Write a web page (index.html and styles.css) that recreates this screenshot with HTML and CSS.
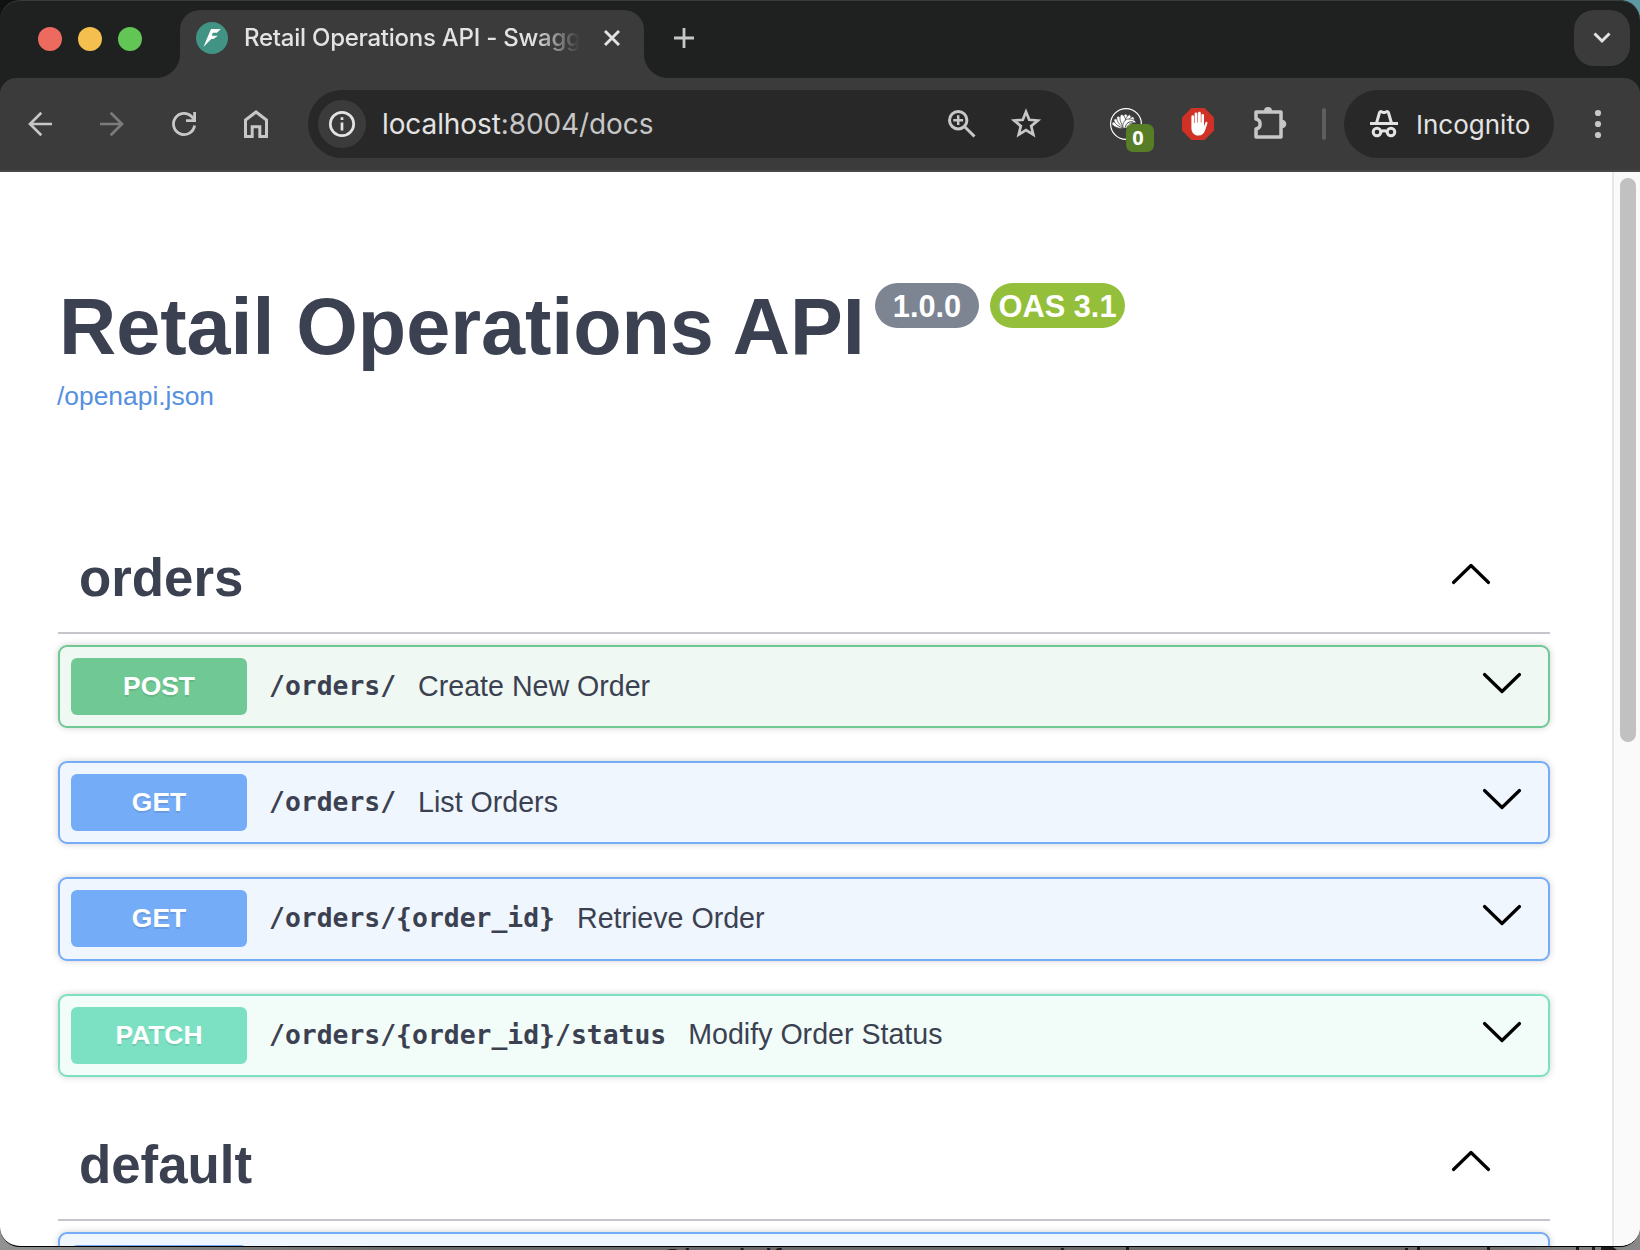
FILE: index.html
```html
<!DOCTYPE html>
<html lang="en">
<head>
<meta charset="utf-8">
<title>Retail Operations API - Swagger UI</title>
<link rel="stylesheet" href="styles.css">
</head>
<body>
<div class="window">
  <header class="tabstrip">
    <div class="lights"><i class="light red"></i><i class="light yellow"></i><i class="light green"></i></div>
    <div class="tab">
      <svg class="favicon" width="32" height="32" viewBox="0 0 32 32"><circle cx="16" cy="16" r="16" fill="#419384"/><path d="M15 7h9.800l-3.800 3.700h-4.200l-1 3.100h6l-4.300 3.300h-2.200L7.400 25z" fill="#fff"/></svg>
      <span class="tab-title">Retail Operations API - Swagger UI</span>
      <svg class="tab-close" width="16" height="16" viewBox="0 0 16 16" fill="none" stroke="#e3e3e3" stroke-width="2.9"><path d="M1 1l14 14M15 1L1 15"/></svg>
    </div>
    <svg class="new-tab" width="20" height="20" viewBox="0 0 20 20" fill="none" stroke="#c7c7c7" stroke-width="2.8"><path d="M10 0v20M0 10h20"/></svg>
    <button class="tab-search"><svg width="18" height="12" viewBox="0 0 18 12" fill="none" stroke="#e3e3e3" stroke-width="3"><path d="M1.5 1.5L9 9l7.5-7.5"/></svg></button>
  </header>

  <nav class="toolbar">
    <div class="nav-buttons">
      <svg width="32" height="32" viewBox="0 0 32 32" fill="none" stroke="#c7c7c7" stroke-width="2.7"><path d="M28 16H6M17.3 4.8L6 16l11.300 11.200"/></svg>
      <svg width="32" height="32" viewBox="0 0 32 32" fill="none" stroke="#7c7c7c" stroke-width="2.7"><path d="M4 16h22M14.700 4.800L26 16 14.700 27.200"/></svg>
      <svg width="32" height="32" viewBox="0 0 32 32" fill="none" stroke="#c7c7c7" stroke-width="2.8"><path d="M26.600 17.500A10.600 10.600 0 1 1 23.800 8.700L26.200 11.600"/><path d="M26.600 4v8.600H18"/></svg>
      <svg width="32" height="32" viewBox="0 0 32 32" fill="none" stroke="#c7c7c7" stroke-width="3"><path d="M5.500 28.500V12L16 4l10.500 8v16.500h-6.700V18.700h-7.600v9.800z"/></svg>
    </div>
    <div class="omnibox">
      <span class="site-info"><svg width="28" height="28" viewBox="0 0 28 28" fill="none" stroke="#e3e3e3" stroke-width="2.7"><circle cx="14" cy="14" r="11.700"/><path d="M14 12.500v8M14 7.300v2.800"/></svg></span>
      <span class="url">localhost<span class="url-rest">:8004/docs</span></span>
      <svg class="zoom-icon" width="28" height="28" viewBox="0 0 28 28" fill="none" stroke="#c7c7c7" stroke-width="3"><circle cx="10.200" cy="10.200" r="8.700"/><path d="M16.700 16.700L26.500 26.500"/><path d="M10.200 5.300v9.800M5.300 10.200h9.800" stroke-width="2.500"/></svg>
      <svg width="32" height="32" viewBox="0 0 32 32" fill="none" stroke="#c7c7c7" stroke-width="2.700"><path d="M16 3.800l3.200 8 8.600.7-6.600 5.600 2.100 8.500L16 22l-7.300 4.600 2.100-8.500-6.600-5.600 8.600-.7z"/></svg>
    </div>
    <div class="extensions">
      <div class="ext">
        <svg width="32" height="32" viewBox="0 0 32 32"><circle cx="16" cy="16" r="15.400" fill="none" stroke="#fff" stroke-width="1.200"/><g fill="#fff" stroke="#3b3b3b" stroke-width=".7"><path id="leaf" d="M15 20C11.500 15 12.500 7 15.500 6c3.500 1 4 8-.5 14z"/><use href="#leaf" transform="rotate(-72 15 20)"/><use href="#leaf" transform="rotate(-54 15 20)"/><use href="#leaf" transform="rotate(-36 15 20)"/><use href="#leaf" transform="rotate(-18 15 20)"/><use href="#leaf" transform="rotate(18 15 20)"/><use href="#leaf" transform="rotate(36 15 20)"/><path d="M13 20c-1-5 2-9 6-9s7 2 7 4c-5-1-8 1-9 5z"/></g><path d="M15.500 19c.5-4 4-6 7.500-5" stroke="#3b3b3b" fill="none"/></svg>
        <span class="badge">0</span>
      </div>
      <svg width="32" height="32" viewBox="0 0 32 32"><path d="M9.400 0h13.200L32 9.400v13.200L22.600 32H9.400L0 22.600V9.400z" fill="#d03126"/><path d="M9.400 17V8.500a1.300 1.300 0 0 1 2.600 0V15h.6V6a1.400 1.400 0 0 1 2.800 0v8.500h.6V5.200a1.400 1.400 0 0 1 2.800 0v9.300h.6V7.300a1.300 1.300 0 0 1 2.600 0V18.500l1.200-3.600c.6-1.700 2.600-1.500 2.200.5L23.200 22c-1 3.400-3.200 5.600-6.700 5.600-4.600 0-7.100-3.400-7.100-7.600z" fill="#fff"/></svg>
      <svg class="puzzle" width="34" height="34" viewBox="0 0 34 34"><path d="M2 6h25v25H2v-8a5.100 5.100 0 0 0 0-10z" fill="none" stroke="#c7c7c7" stroke-width="3.500" stroke-linejoin="round"/><path d="M10 5a4 4 0 0 1 8 0zM28 13.700a4.300 4.300 0 0 1 0 8.600z" fill="#c7c7c7"/></svg>
    </div>
    <i class="divider"></i>
    <div class="incognito">
      <svg width="28" height="28" viewBox="0 0 28 28" fill="none" stroke="#e3e3e3" stroke-width="3"><path d="M0 13.500h28M6.700 12.500L9.500 2.700c.3-1 1-1.300 1.800-1l1.500.6c.8.300 1.600.3 2.400 0l1.500-.6c.8-.3 1.500 0 1.800 1L21.300 12.500"/><circle cx="7" cy="22" r="3.800"/><circle cx="21" cy="22" r="3.800"/><path d="M11 21.600c2-1 4-1 6 0"/></svg>
      <span>Incognito</span>
    </div>
    <svg class="menu-dots" width="8" height="32" viewBox="0 0 8 32" fill="#c7c7c7"><circle cx="4" cy="5" r="3.100"/><circle cx="4" cy="16" r="3.100"/><circle cx="4" cy="27" r="3.100"/></svg>
  </nav>

  <div class="viewport">
    <main class="page">
      <div class="title-row">
        <h1>Retail Operations API</h1>
        <span class="pill version">1.0.0</span>
        <span class="pill oas">OAS 3.1</span>
      </div>
      <a class="spec-link">/openapi.json</a>

      <section class="tag-section first">
        <h2 class="tag">orders<svg class="chev" width="40" height="24" viewBox="0 0 40 24"><path d="M2.500 20.500L20 3.500l17.500 17"/></svg></h2>
        <div class="ops">
          <div class="op post"><span class="method">POST</span><span class="path">/orders/</span><span class="desc">Create New Order</span><svg class="chev" width="40" height="24" viewBox="0 0 40 24"><path d="M2.500 3.500L20 20.500l17.500-17"/></svg></div>
          <div class="op get"><span class="method">GET</span><span class="path">/orders/</span><span class="desc">List Orders</span><svg class="chev" width="40" height="24" viewBox="0 0 40 24"><path d="M2.500 3.500L20 20.500l17.500-17"/></svg></div>
          <div class="op get"><span class="method">GET</span><span class="path">/orders/{order_id}</span><span class="desc">Retrieve Order</span><svg class="chev" width="40" height="24" viewBox="0 0 40 24"><path d="M2.500 3.500L20 20.500l17.500-17"/></svg></div>
          <div class="op patch"><span class="method">PATCH</span><span class="path">/orders/{order_id}/status</span><span class="desc">Modify Order Status</span><svg class="chev" width="40" height="24" viewBox="0 0 40 24"><path d="M2.500 3.500L20 20.500l17.500-17"/></svg></div>
        </div>
      </section>

      <section class="tag-section">
        <h2 class="tag">default<svg class="chev" width="40" height="24" viewBox="0 0 40 24"><path d="M2.500 20.500L20 3.500l17.500 17"/></svg></h2>
        <div class="ops"><div class="op get"><span class="method"></span></div></div>
      </section>
    </main>
    <div class="scrollbar"><div class="thumb"></div></div>
  </div>
</div>
<div class="behind"><span>Check if</span><span class="behind-word">th</span><svg width="520" height="3" viewBox="0 0 520 3" fill="#1c1a1a"><path d="M25 0h3v3h-3zM304 1h3v2h-3zM316 0h3v3h-3zM386 0h3v3h-3zM475 0h3v3h-3zM491 0h3v3h-3zM500 0h12l4 3h-16z"/></svg></div>
</body>
</html>
```
FILE: styles.css
```css
* { box-sizing: border-box; }

body {
  margin: 0;
  width: 1640px;
  height: 1250px;
  overflow: hidden;
  background: linear-gradient(90deg, #101211 0 50%, #5d9aa6 50%) top / 100% 60px no-repeat, linear-gradient(90deg, #929292, #6b6a6a 25%, #6d6b6b 90%, #8a8888);
  font-family: "Liberation Sans", Arial, sans-serif;
  color: #3b4151;
}

svg { display: block; flex: none; }

.window {
  display: flex;
  flex-direction: column;
  height: 1247px;
  border-bottom: 1px solid #000;
  border-radius: 20px;
  overflow: hidden;
  background: #1f2120;
}

/* Tab strip */
.tabstrip {
  display: flex;
  align-items: flex-start;
  flex: none;
  height: 78px;
  padding: 10px 10px 0 38px;
  font-family: Inter, sans-serif;
  border-radius: 20px 20px 0 0;
  box-shadow: inset 0 1px 0 #3a3c3b;
}

.lights { display: flex; gap: 16px; margin-top: 17px; width: 142px; }
.light { width: 24px; height: 24px; border-radius: 50%; }
.red { background: #ed6a5f; }
.yellow { background: #f5bf4f; }
.green { background: #62c655; }

.tab {
  position: relative;
  display: flex;
  align-items: center;
  width: 464px;
  height: 68px;
  padding: 0 24px 12px 16px;
  border-radius: 20px 20px 0 0;
  background: #3b3b3b;
}

.tab::before,
.tab::after {
  content: "";
  position: absolute;
  bottom: 0;
  width: 24px;
  height: 24px;
}
.tab::before { left: -24px; background: radial-gradient(circle at 0 0, transparent 23.500px, #3b3b3b 24.500px); }
.tab::after { right: -24px; background: radial-gradient(circle at 100% 0, transparent 23.500px, #3b3b3b 24.500px); }

.tab-title {
  width: 336px;
  margin-left: 16px;
  overflow: hidden;
  white-space: nowrap;
  font-size: 24px;
  font-weight: 500;
  line-height: 32px;
  letter-spacing: -.250px;
  color: #e3e3e3;
  -webkit-mask-image: linear-gradient(90deg, #000 290px, transparent 336px);
  mask-image: linear-gradient(90deg, #000 290px, transparent 336px);
}

.tab-close { margin-left: auto; }
.new-tab { margin: 18px 0 0 30px; }

.tab-search {
  display: flex;
  align-items: center;
  justify-content: center;
  width: 56px;
  height: 56px;
  margin-left: auto;
  padding: 0;
  border: 0;
  border-radius: 20px;
  background: #3b3b3b;
}

/* Toolbar */
.toolbar {
  display: flex;
  align-items: center;
  flex: none;
  height: 94px;
  padding: 0 38px 0 24px;
  border-radius: 16px 16px 0 0;
  border-bottom: 2px solid #474747;
  background: #3b3b3b;
  font-family: Inter, sans-serif;
}

.nav-buttons { display: flex; gap: 40px; }

.omnibox {
  display: flex;
  align-items: center;
  width: 766px;
  height: 68px;
  margin-left: 36px;
  padding: 0 32px 0 10px;
  border-radius: 34px;
  background: #282828;
}

.site-info {
  display: flex;
  align-items: center;
  justify-content: center;
  width: 48px;
  height: 48px;
  border-radius: 50%;
  background: #3b3b3b;
}

.url {
  flex: 1;
  margin-left: 16px;
  font-size: 28px;
  line-height: 36px;
  letter-spacing: -.100px;
  color: #e3e3e3;
}
.url-rest { color: #c7c7c7; }
.zoom-icon { margin-right: 34px; }

.extensions { display: flex; align-items: flex-start; gap: 40px; height: 32px; margin-left: 36px; }
.ext { position: relative; }
.badge {
  position: absolute;
  left: 16px;
  top: 16px;
  width: 28px;
  height: 28px;
  padding-right: 4px;
  border-radius: 7px;
  background: #587d27;
  color: #fff;
  font: bold 20px/28px "Noto Sans", sans-serif;
  text-align: center;
}

.puzzle { margin-top: -2px; }
.divider { width: 4px; height: 32px; margin-left: 34px; border-radius: 2px; background: #5e5e5e; }

.incognito {
  display: flex;
  align-items: center;
  gap: 18px;
  width: 210px;
  height: 68px;
  margin-left: 18px;
  padding-left: 26px;
  border-radius: 34px;
  background: #282828;
  font-size: 26px;
  color: #e3e3e3;
}

.menu-dots { margin-left: auto; }

/* Documentation page */
.viewport { display: flex; flex: 1; min-height: 0; background: #fff; }
.page { flex: 1; padding: 111px 62px 0 58px; overflow: hidden; }

.title-row { display: flex; align-items: flex-start; height: 98px; }
h1 {
  width: 817px;
  margin: 4px 0 0;
  padding-left: 1px;
  white-space: nowrap;
  font-size: 79.200px;
  line-height: 80px;
  letter-spacing: -.050px;
}

.pill {
  height: 45px;
  border-radius: 23px;
  font-size: 30.800px;
  font-weight: bold;
  line-height: 47px;
  text-align: center;
  color: #fff;
}
.version { width: 104px; background: #7d8492; }
.oas { width: 135px; margin-left: 11px; background: #93bf3b; }

.spec-link { display: block; margin-left: -1px; font-size: 26.400px; line-height: 30px; color: #5590df; }

.tag-section { margin-top: 38px; }
.tag-section.first { margin-top: 117px; }

.tag {
  display: flex;
  align-items: center;
  justify-content: space-between;
  height: 106px;
  margin: 0 0 11px;
  padding: 0 59px 4px 21px;
  border-bottom: 2px solid #c4c6cb;
  font-size: 52.800px;
  line-height: 60px;
}

.chev { fill: none; stroke: #000; stroke-width: 3.200; stroke-linecap: round; stroke-linejoin: round; }
.tag .chev { margin-bottom: 8px; }

.ops { display: flex; flex-direction: column; gap: 33px; }

.op {
  display: flex;
  align-items: center;
  height: 83.200px;
  padding: 0 26px 0 11px;
  border: 2px solid;
  border-radius: 9px;
  box-shadow: 0 0 7px rgba(0, 0, 0, .19);
}
.op .chev { margin: 0 0 7px auto; }

.method {
  width: 176px;
  height: 57px;
  border-radius: 6px;
  font-size: 26.400px;
  font-weight: bold;
  line-height: 57px;
  text-align: center;
  color: #fff;
  text-shadow: 0 2px 0 rgba(0, 0, 0, .1);
}

.path {
  margin: 0 22px 1px;
  font: bold 26.400px/36px "DejaVu Sans Mono", monospace;
}

.desc { margin-bottom: 2px; font-size: 28.600px; line-height: 36px; }

.post { border-color: #70c995; background: #eff8f3; }
.post .method { background: #70c995; }
.get { border-color: #74acf8; background: #f0f6fe; }
.get .method { background: #74acf8; }
.patch { border-color: #7ce1c3; background: #f2fcf9; }
.patch .method { background: #7ce1c3; }

.scrollbar {
  width: 28px;
  padding: 6px 4px 0 6px;
  border-left: 2px solid #e8e8e8;
  background: #fafafa;
}
.thumb { height: 564px; border-radius: 8px; background: #c1c1c1; }

/* Sliver of the window underneath */
.behind {
  display: flex;
  height: 3px;
  padding-left: 659px;
  overflow: hidden;
  font-size: 34px;
  line-height: 26px;
  color: #1c1a1a;
}
.behind span { width: 390px; flex: none; }
.behind .behind-word { width: 52px; }
```
